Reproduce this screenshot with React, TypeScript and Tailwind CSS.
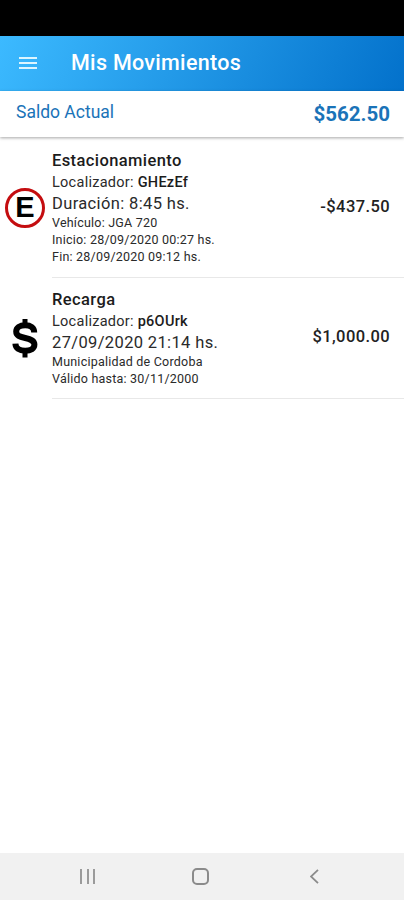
import type { ReactNode } from 'react'

type Movement = {
  id: string
  title: string
  detail: string
  notes: string[]
  amount: string
  icon: ReactNode
}

function ParkingIcon() {
  return (
    <div className="-mt-px flex size-10 items-center justify-center rounded-full border-[3px] border-[#c40d10] bg-white font-['Liberation_Sans',sans-serif] text-[29px] leading-none font-bold text-black">
      <span>E</span>
    </div>
  )
}

function TopUpIcon() {
  return (
    <svg
      className="h-10 w-[26px] ml-[7px] -mt-px"
      viewBox="0 0 26 40"
      fill="none"
      stroke="#000"
    >
      <path d="M13 1 V8 M13 32 V39.5" strokeWidth="5" />
      <path
        d="M22.2 14.5 C22.2 9.8 18.8 7.3 13.2 7.3 C7.8 7.3 4.2 9.8 4.2 13.6 C4.2 17.6 7.6 18.7 13.2 20 C19 21.3 22.4 22.6 22.4 26.6 C22.4 30.6 18.8 32.8 13.2 32.8 C7.2 32.8 3.6 30.2 3.4 25.6"
        strokeWidth="6"
      />
    </svg>
  )
}

const movements: Movement[] = [
  {
    id: 'GHEzEf',
    title: 'Estacionamiento',
    detail: 'Duración: 8:45 hs.',
    notes: [
      'Vehículo: JGA 720',
      'Inicio: 28/09/2020 00:27 hs.',
      'Fin: 28/09/2020 09:12 hs.',
    ],
    amount: '-$437.50',
    icon: <ParkingIcon />,
  },
  {
    id: 'p6OUrk',
    title: 'Recarga',
    detail: '27/09/2020 21:14 hs.',
    notes: ['Municipalidad de Cordoba', 'Válido hasta: 30/11/2000'],
    amount: '$1,000.00',
    icon: <TopUpIcon />,
  },
]

function Header() {
  return (
    <header className="flex h-[55px] items-center bg-linear-[115deg,#3cbaff_0%,#0371cb_100%] pl-[19px] text-white">
      <button
        className="-mt-px flex w-[18px] flex-col gap-[3px]"
        aria-label="Menú"
      >
        <span className="h-0.5 bg-[#dcf5ff]" />
        <span className="h-0.5 bg-[#dcf5ff]" />
        <span className="h-0.5 bg-[#dcf5ff]" />
      </button>
      <h1 className="ml-[34px] text-[21.5px] font-medium tracking-[0.3px]">
        Mis Movimientos
      </h1>
    </header>
  )
}

function MovementRow({ movement }: { movement: Movement }) {
  return (
    <li className="flex">
      <div className="flex w-[52px] shrink-0 items-center pl-[5px]">
        {movement.icon}
      </div>
      <div className="flex flex-1 items-center justify-between border-b border-[#e8e8e8] pt-[11px] pb-[11.5px] pr-3.5">
        <div className="whitespace-nowrap text-[#2a2a2a]">
          <h2 className="text-[16.5px] leading-[22px] font-medium tracking-[0.4px] text-[#1c1c1c]">
            {movement.title}
          </h2>
          <p className="text-[14.5px] leading-[21px] tracking-[0.27px]">
            Localizador:{' '}
            <span className="font-medium text-[#1c1c1c]">{movement.id}</span>
          </p>
          <p className="text-[16.5px] leading-[21px] tracking-[0.36px]">
            {movement.detail}
          </p>
          {movement.notes.map((note) => (
            <p
              key={note}
              className="text-[12.5px] leading-[17px] tracking-[0.22px]"
            >
              {note}
            </p>
          ))}
        </div>
        <span className="-mt-px text-[16.5px] font-medium tracking-[0.4px] text-[#222]">
          {movement.amount}
        </span>
      </div>
    </li>
  )
}

function NavBar() {
  return (
    <nav className="flex h-[47px] items-center justify-between bg-[#f1f1f1] pr-[85px] pl-20 text-[#8b8b8b]">
      <div className="flex h-[15px] w-[15px] justify-between">
        <span className="w-0.5 bg-[#9b9b9b]" />
        <span className="w-0.5 bg-[#9b9b9b]" />
        <span className="w-0.5 bg-[#9b9b9b]" />
      </div>
      <div className="-ml-[5px] size-[17px] rounded-[5px] border-2 border-[#8b8b8b]" />
      <svg
        className="h-[15px] w-[9px]"
        viewBox="0 0 9 15"
        fill="none"
        stroke="currentColor"
        strokeWidth="1.8"
      >
        <path d="M8 0.8 L1 7.5 L8 14.2" />
      </svg>
    </nav>
  )
}

export default function App() {
  return (
    <div className="flex h-[900px] w-[404px] flex-col overflow-hidden bg-white font-[Roboto,sans-serif]">
      <div className="h-9 bg-black" />
      <Header />
      <div className="flex h-[46px] items-center justify-between pr-3.5 pb-1 pl-4 text-[#1a73b8] shadow-[0_1px_3px_rgba(0,0,0,0.35)]">
        <span className="text-[17.5px]">Saldo Actual</span>
        <span className="pt-1 text-[20.5px] font-bold">$562.50</span>
      </div>
      <ul className="flex-1 pt-0.5">
        {movements.map((movement) => (
          <MovementRow key={movement.id} movement={movement} />
        ))}
      </ul>
      <NavBar />
    </div>
  )
}
